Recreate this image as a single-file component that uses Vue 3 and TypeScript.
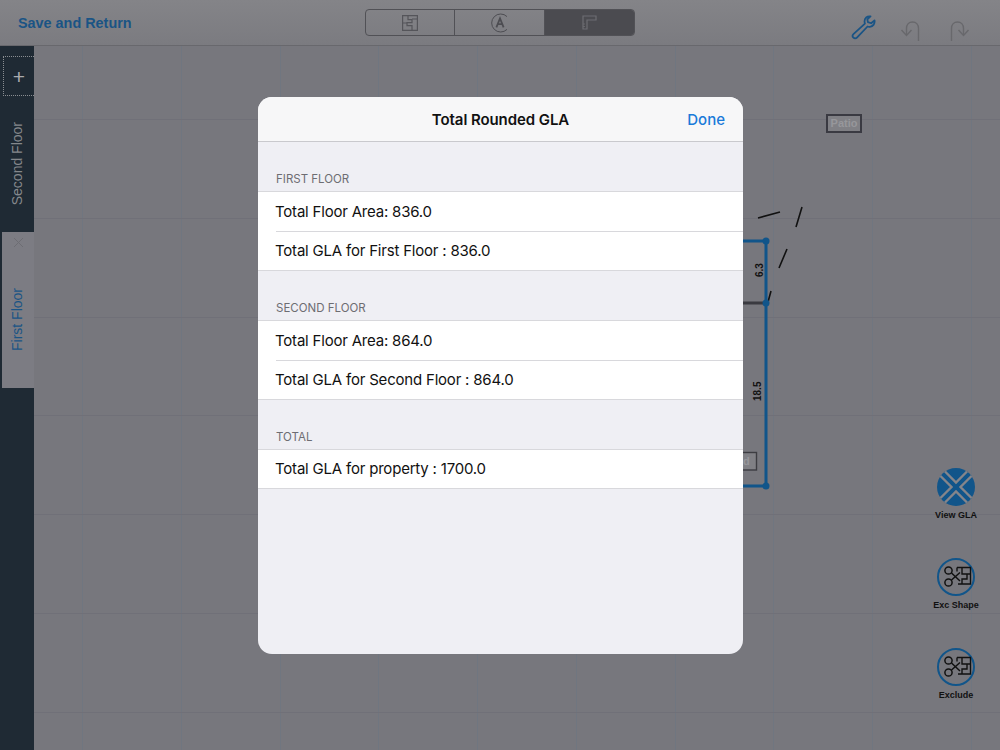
<script setup lang="ts">
interface Row {
  text: string
}
interface Section {
  title: string
  rows: Row[]
}

const sections: Section[] = [
  {
    title: 'First Floor',
    rows: [{ text: 'Total Floor Area: 836.0' }, { text: 'Total GLA for First Floor : 836.0' }]
  },
  {
    title: 'Second Floor',
    rows: [{ text: 'Total Floor Area: 864.0' }, { text: 'Total GLA for Second Floor : 864.0' }]
  },
  {
    title: 'Total',
    rows: [{ text: 'Total GLA for property : 1700.0' }]
  }
]

const actions = [
  { label: 'View GLA', solid: true },
  { label: 'Exc Shape', solid: false },
  { label: 'Exclude', solid: false }
]

// canvas grid, one line every 98.75px
const gridX = Array.from({ length: 10 }, (_, i) => Math.round(82 + i * 98.75) + 0.5)
const gridY = Array.from({ length: 7 }, (_, i) => Math.round(119 + i * 98.75) + 0.5)
</script>

<template>
  <div class="page">
    <header class="topbar">
      <div class="save">Save and Return</div>
      <div class="segments">
        <div class="seg">
          <svg width="16" height="16" viewBox="0 0 16 16" fill="none" stroke="#55555a" stroke-width="1.2">
            <path d="M.6.6h14.800v14.800H.6z" />
            <path d="M6 .6v4h4v3H5v3h5v5M10 4h5.400M.6 8H5" />
          </svg>
        </div>
        <div class="seg">
          <svg width="20" height="20" viewBox="0 0 20 20" fill="none" stroke="#4d4d52">
            <path d="M17 3.600A9 9 0 1 0 17 16.400" stroke-width="1" />
            <path d="M6.400 14.400 10 5.400l3.600 9M7.800 11.200h4.400" stroke-width="1.800" />
          </svg>
        </div>
        <div class="seg seg-on">
          <svg width="15" height="15" viewBox="0 0 15 15" fill="none" stroke="#6d6d72" stroke-width="1.200">
            <path d="M1 14V1h13v4H5v9z" />
            <path d="M1 9h2M1 11.500h2" stroke-width="0.800" />
          </svg>
        </div>
      </div>
      <div class="tools">
        <svg class="wrench" width="26" height="26" viewBox="0 0 28 28" fill="none" stroke="#1a5485" stroke-width="1.900" stroke-linejoin="round">
          <path d="M21 1.500c-3.600-.7-6.600 2-6.400 5.600 0 1 .2 1.500.4 2.200L2.600 20.600c-1.200 1.200-1 2.800 0 3.800s2.700 1.200 3.800 0l11.400-12c.8.3 1.600.4 2.500.3 3.600-.4 5.700-3.500 5-7l-3.600 3.200-3.500-1.200-.6-3z" />
        </svg>
        <svg class="arrow" width="20" height="20" viewBox="0 0 20 20" fill="none" stroke="#68686c" stroke-width="1.400">
          <path d="M18.500 20V7.500C18.500 3.500 16 1 12.500 1S6.500 3.500 6.500 7.500V14" />
          <path d="M1.500 9 6.500 14.500 11.500 9" />
        </svg>
        <svg class="arrow" width="20" height="20" viewBox="0 0 20 20" fill="none" stroke="#68686c" stroke-width="1.400">
          <path d="M1.500 20V7.500C1.500 3.500 4 1 7.500 1s6 2.500 6 6.500V14" />
          <path d="M8.500 9l5 5.500 5-5.500" />
        </svg>
      </div>
    </header>

    <div class="main">
      <aside class="side">
        <div class="add">+</div>
        <div class="tab">
          <span>Second Floor</span>
        </div>
        <div class="tab tab-on">
          <svg class="close" width="11" height="11" viewBox="0 0 11 11" stroke="#6d6d73" stroke-width="1">
            <path d="M1 1 10 10M10 1 1 10" />
          </svg>
          <span>First Floor</span>
        </div>
      </aside>

      <div class="canvas">
        <svg class="drawing" width="966" height="704" viewBox="34 46 966 704">
          <g stroke-width="1" shape-rendering="crispEdges">
            <path v-for="x in gridX" :key="x" :d="`M${x} 46V750`" stroke="#707680" />
            <path v-for="y in gridY" :key="y" :d="`M34 ${y}H1000`" stroke="#707078" />
          </g>
          <g stroke="#111" stroke-width="1.600">
            <path d="M758 218 780 212M796 227 802 207M779 268 787 249M768 302 771 291" />
          </g>
          <path d="M743 303H766" stroke="#3a3a40" stroke-width="3" />
          <path d="M743 241H766V486H743" stroke="#11558a" stroke-width="3" fill="none" />
          <g fill="#11558a">
            <circle cx="766" cy="241" r="3.500" />
            <circle cx="766" cy="303" r="3.500" />
            <circle cx="766" cy="486" r="3.500" />
          </g>
          <text x="763" y="277" transform="rotate(-90 763 277)" class="dim">6.3</text>
          <text x="760.500" y="401" transform="rotate(-90 760.500 401)" class="dim">18.5</text>
          <rect x="735" y="452.500" width="21.500" height="17.500" fill="#808085" stroke="#3d3d42" stroke-width="1.400" />
          <text x="743" y="465" class="faint">d</text>
        </svg>
        <div class="patio">Patio</div>
        <div class="actions">
          <div v-for="a in actions" :key="a.label" class="action">
            <svg v-if="a.solid" width="40" height="40" viewBox="0 0 40 40">
              <circle cx="20" cy="20" r="19" fill="#11558a" />
              <path d="M9 4.500 20 15.500 31 4.500M9 35.500 20 24.500 31 35.500M4.500 9 15.500 20 4.500 31M35.500 9 24.500 20 35.500 31" fill="none" stroke="#85858a" stroke-width="2.400" />
            </svg>
            <svg v-else width="40" height="40" viewBox="0 0 40 40" fill="none">
              <circle cx="20" cy="20" r="18" stroke="#11558a" stroke-width="2" />
              <g stroke="#111" stroke-width="1.500">
                <circle cx="12.500" cy="13.500" r="3.600" />
                <circle cx="12.500" cy="25.500" r="3.600" />
                <path d="M15.500 16 24 24M15.500 23 24 15.500" />
                <path d="M21 10.500H34.500V27H22M21 10.500v4M26 10.500v6.500h5v5h-5v5M34.500 17H31" stroke-width="1.400" />
              </g>
            </svg>
            <span>{{ a.label }}</span>
          </div>
        </div>
      </div>
    </div>

    <div class="modal">
      <div class="modal-head">
        <span class="modal-title">Total Rounded GLA</span>
        <span class="done">Done</span>
      </div>
      <div v-for="s in sections" :key="s.title" class="section">
        <div class="section-title">{{ s.title }}</div>
        <ul class="rows">
          <li v-for="r in s.rows" :key="r.text" class="row">
            <span>{{ r.text }}</span>
          </li>
        </ul>
      </div>
    </div>
  </div>
</template>

<style>
body {
  background: #77777d;
}
</style>

<style scoped>
.page {
  position: relative;
  width: 1000px;
  height: 750px;
  display: flex;
  flex-direction: column;
  overflow: hidden;
  font-family: "Liberation Sans", sans-serif;
}

.topbar {
  height: 46px;
  box-sizing: border-box;
  display: flex;
  align-items: center;
  padding-left: 18px;
  background: linear-gradient(#848488, #7b7b80);
  border-bottom: 1px solid #68686d;
}

.save {
  width: 347px;
  font-size: 14.400px;
  font-weight: bold;
  color: #1a5485;
}

.segments {
  width: 270px;
  height: 27px;
  box-sizing: border-box;
  display: flex;
  border: 1px solid #515156;
  border-radius: 4px;
  overflow: hidden;
}

.seg {
  flex: 1;
  display: flex;
  align-items: center;
  justify-content: center;
  border-left: 1px solid #515156;
}

.seg:first-child {
  flex: 0 0 88px;
  border-left: 0;
}

.seg-on {
  background: #4b4b50;
}

.tools {
  display: flex;
  align-items: center;
  margin-left: 216px;
}

.wrench {
  margin-right: 23px;
  margin-top: 10px;
}

.arrow {
  margin-right: 30px;
  margin-top: 17px;
}

.main {
  flex: 1;
  display: flex;
  min-height: 0;
}

.side {
  width: 34px;
  padding-top: 10px;
  box-sizing: border-box;
  background: #1f2a34;
  display: flex;
  flex-direction: column;
}

.add {
  width: 31px;
  height: 40px;
  margin-left: 3px;
  box-sizing: border-box;
  border: 1px dotted #8a8e92;
  border-right: 0;
  color: #a9abae;
  font-size: 21px;
  line-height: 40px;
  text-align: center;
}

.tab {
  height: 136px;
  display: flex;
  align-items: center;
  justify-content: center;
  color: #85888c;
  font-size: 14px;
}

.tab span {
  writing-mode: vertical-rl;
  transform: rotate(180deg);
}

.tab-on {
  position: relative;
  height: 156px;
  box-sizing: border-box;
  margin-left: 2px;
  padding: 18px 2px 0 0;
  background: #7c7c83;
  color: #1a5485;
}

.close {
  position: absolute;
  left: 11px;
  top: 5px;
}

.canvas {
  position: relative;
  flex: 1;
  background-color: #77777d;
}

.drawing {
  position: absolute;
  left: 0;
  top: 0;
}

.dim {
  font-size: 10px;
  font-weight: bold;
  fill: #111;
}

.faint {
  font-size: 11px;
  font-weight: bold;
  fill: #97979b;
}

.patio {
  position: absolute;
  left: 792px;
  top: 68px;
  width: 36px;
  height: 19px;
  box-sizing: border-box;
  border: 2px solid #3a3a42;
  background: #808085;
  color: #97979b;
  font-size: 11px;
  font-weight: bold;
  line-height: 15px;
  text-align: center;
}

.actions {
  position: absolute;
  right: 12px;
  top: 421px;
  width: 64px;
  display: flex;
  flex-direction: column;
  gap: 35px;
}

.action {
  height: 55px;
  display: flex;
  flex-direction: column;
  align-items: center;
  font-size: 9px;
  font-weight: bold;
  color: #111;
}

.action span {
  margin-top: 3px;
}

.modal {
  position: absolute;
  left: 258px;
  top: 97px;
  width: 485px;
  height: 557px;
  border-radius: 14px;
  overflow: hidden;
  background: #efeff4;
  font-family: Inter, "Liberation Sans", sans-serif;
  color: #111;
}

.modal-head {
  position: relative;
  height: 45px;
  box-sizing: border-box;
  background: #f7f7f8;
  border-bottom: 1px solid #c9c9cd;
  display: flex;
  align-items: center;
  justify-content: center;
}

.modal-title {
  font-size: 15px;
  font-weight: 600;
  letter-spacing: -0.080px;
}

.done {
  position: absolute;
  right: 18px;
  font-size: 15px;
  font-weight: 500;
  color: #1a7ad9;
}

.section {
  padding-top: 29px;
}

.section-title {
  height: 20px;
  padding-left: 18px;
  font-size: 11.500px;
  line-height: 16px;
  text-transform: uppercase;
  color: #6d6d72;
}

.rows {
  margin: 0;
  padding: 0;
  list-style: none;
  background: #fff;
  border-top: 1px solid #d8d8dc;
  border-bottom: 1px solid #d8d8dc;
}

.row {
  height: 39px;
  box-sizing: border-box;
  margin-left: 18px;
  padding-bottom: 1px;
  display: flex;
  align-items: center;
  font-size: 15px;
  letter-spacing: -0.200px;
}

.row span {
  margin-left: -1px;
}

.row:only-child {
  height: 38px;
}

.row + .row {
  border-top: 1px solid #d8d8dc;
}
</style>
